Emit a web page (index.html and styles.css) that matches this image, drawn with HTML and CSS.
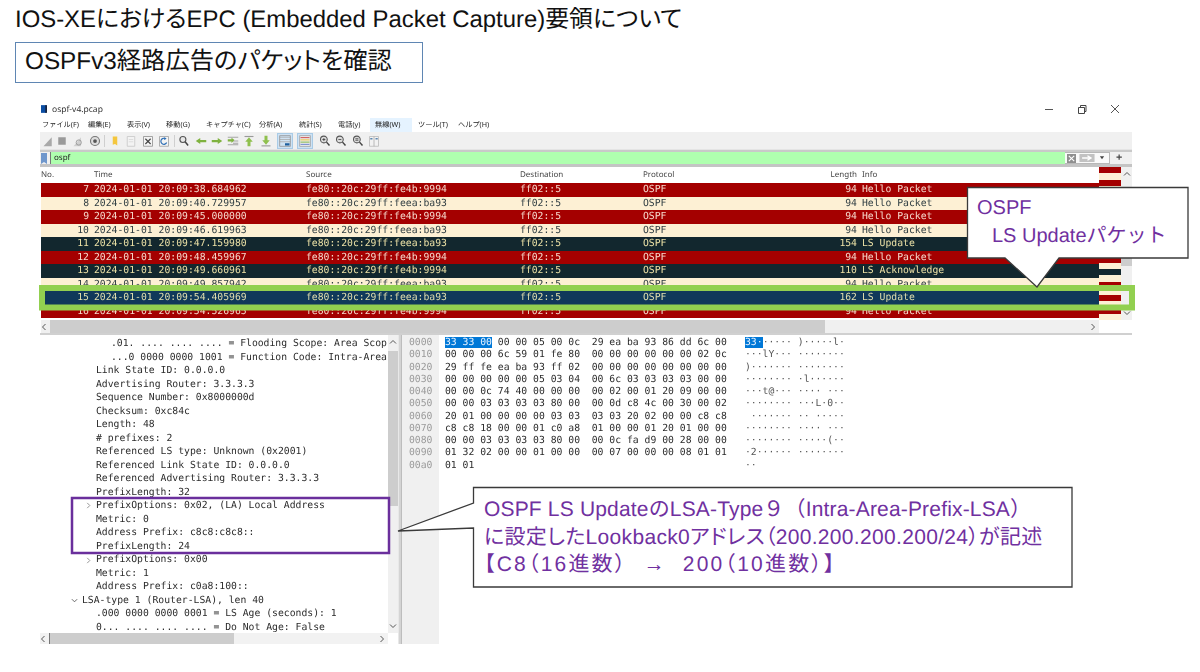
FILE: index.html
```html
<!DOCTYPE html>
<html lang="ja">
<head>
<meta charset="utf-8">
<title>IOS-XE EPC</title>
<link rel="stylesheet" href="styles.css">
</head>
<body>
<main class="slide">
  <h1 class="title">IOS-XEにおけるEPC (Embedded Packet Capture)要領について</h1>
  <h2 class="subtitle">OSPFv3経路広告のパケットを確認</h2>

  <section class="window">
    <header class="titlebar">
      <svg class="appicon" viewBox="0 0 7 9"><rect width="6" height="9" fill="#0b4da2"/><rect x="5" width="2" height="9" fill="#16233f"/></svg>
      <span class="wintitle">ospf-v4.pcap</span>
      <span class="winbtns">
        <svg viewBox="0 0 10 10"><path d="M1 5.500h8" stroke="#555" fill="none"/></svg>
        <svg viewBox="0 0 10 10"><path d="M1.500 3.500h6v6h-6zM3.500 3.500v-2h5.500v6h-1.500" stroke="#444" fill="none"/></svg>
        <svg viewBox="0 0 10 10"><path d="M1 1l8 8M9 1l-8 8" stroke="#555" fill="none"/></svg>
      </span>
    </header>

    <nav class="menu">
      <span class="mi">ファイル(F)</span><span class="mi">編集(E)</span><span class="mi">表示(V)</span><span class="mi">移動(G)</span><span class="mi">キャプチャ(C)</span><span class="mi">分析(A)</span><span class="mi">統計(S)</span><span class="mi">電話(y)</span><span class="mi on">無線(W)</span><span class="mi">ツール(T)</span><span class="mi">ヘルプ(H)</span>
    </nav>

    <div class="toolbar">
      <span class="tb lead"><svg viewBox="0 0 16 16"><path d="M2 15L13 3v12z" fill="#a9a9a9"/></svg></span>
      <span class="tb"><svg viewBox="0 0 16 16"><rect x="3" y="3" width="10" height="10" fill="#9a9a9a"/></svg></span>
      <span class="tb"><svg viewBox="0 0 16 16"><path d="M2 15L12 3v12z" fill="#cfcfcf"/><circle cx="9" cy="10" r="3.500" fill="none" stroke="#8c8c8c"/></svg></span>
      <span class="tb"><svg viewBox="0 0 16 16"><circle cx="8" cy="8" r="6" fill="#ddd" stroke="#777" stroke-width="1.500"/><circle cx="8" cy="8" r="2.500" fill="#555"/></svg></span>
      <span class="sep"></span>
      <span class="tb"><svg viewBox="0 0 16 16"><path d="M5 2h6v12l-3-2-3 1z" fill="#f4c63d"/></svg></span>
      <span class="tb"><svg viewBox="0 0 16 16"><path d="M3 2h10v13H3z" fill="#f3f3f3" stroke="#c4c4c4"/><path d="M5 6h6M5 9h6" stroke="#d5d5d5"/></svg></span>
      <span class="tb"><svg viewBox="0 0 16 16"><path d="M2 2h12v13H2z" fill="#f4f4f4" stroke="#888"/><path d="M4.500 5l7 7M11.500 5l-7 7" stroke="#444" stroke-width="1.500"/></svg></span>
      <span class="tb"><svg viewBox="0 0 16 16"><path d="M2 2h12v13H2z" fill="#f4f4f4" stroke="#999"/><path d="M11.500 10A4 4 0 1 1 10 5" fill="none" stroke="#2f6fb5" stroke-width="1.600"/><path d="M8.500 2.500l3 2.500-3.500 1.500z" fill="#2f6fb5"/></svg></span>
      <span class="sep"></span>
      <span class="tb"><svg viewBox="0 0 16 16"><circle cx="6.500" cy="6" r="4" fill="#e8e8e8" stroke="#555" stroke-width="1.500"/><path d="M9.500 9l4 5" stroke="#444" stroke-width="2"/></svg></span>
      <span class="tb"><svg viewBox="0 0 16 16"><path d="M1 8l6-4v2.500h8v3H7V12z" fill="#7fb23f"/></svg></span>
      <span class="tb"><svg viewBox="0 0 16 16"><path d="M15 8L9 4v2.500H1v3h8V12z" fill="#7fb23f"/></svg></span>
      <span class="tb"><svg viewBox="0 0 16 16"><path d="M1 3h14M1 13h14M8 11h7M8 8h7" stroke="#8d8d8d"/><path d="M10 6.500L6 3.500v2H1v3h5v2z" fill="#7fb23f"/></svg></span>
      <span class="tb"><svg viewBox="0 0 16 16"><path d="M2 2h12" stroke="#9a9a9a" stroke-width="1.500"/><path d="M8 3l5 6h-3v6H6V9H3z" fill="#8fc04e"/></svg></span>
      <span class="tb"><svg viewBox="0 0 16 16"><path d="M2 14.500h12" stroke="#9a9a9a" stroke-width="1.500"/><path d="M8 13l5-6h-3V1H6v6H3z" fill="#8fc04e"/></svg></span>
      <span class="tb hl first"><svg viewBox="0 0 16 16"><path d="M1 3h14M1 6h14M1 9h14" stroke="#a8a8a8"/><rect x="1" y="1" width="14" height="14" fill="none" stroke="#8d8d8d"/><rect x="8" y="11" width="6" height="3" fill="#1f5f9e"/></svg></span>
      <span class="tb hl"><svg viewBox="0 0 16 16"><rect x="1" y="1" width="14" height="14" fill="#eee" stroke="#999"/><path d="M2 3.500h12" stroke="#d25c5c" stroke-width="1.500"/><path d="M2 6.500h12" stroke="#e8c84e" stroke-width="1.500"/><path d="M2 9.500h12" stroke="#8bbb5a" stroke-width="1.500"/><path d="M2 12.500h12" stroke="#7a8fd0" stroke-width="1.500"/></svg></span>
      <span class="tb"><svg viewBox="0 0 16 16"><circle cx="6.500" cy="6" r="4.500" fill="#ddd" stroke="#555" stroke-width="1.400"/><path d="M4.500 6h4M6.500 4v4" stroke="#333"/><path d="M10 9.500l4 4.500" stroke="#444" stroke-width="2"/></svg></span>
      <span class="tb"><svg viewBox="0 0 16 16"><circle cx="6.500" cy="6" r="4.500" fill="#ddd" stroke="#555" stroke-width="1.400"/><path d="M4.500 6h4" stroke="#333"/><path d="M10 9.500l4 4.500" stroke="#444" stroke-width="2"/></svg></span>
      <span class="tb"><svg viewBox="0 0 16 16"><circle cx="6.500" cy="6" r="4.500" fill="#ddd" stroke="#555" stroke-width="1.400"/><path d="M4.500 5h4M4.500 7h4" stroke="#333"/><path d="M10 9.500l4 4.500" stroke="#444" stroke-width="2"/></svg></span>
      <span class="tb"><svg viewBox="0 0 16 16"><path d="M2 2h12v13H2z" fill="#f2f2f2" stroke="#b5b5b5"/><path d="M8 2v13" stroke="#a5a5a5"/><path d="M3 4h3v2H3zM10 4h3v2h-3z" fill="#5f88b0"/></svg></span>
    </div>

    <div class="filterbar">
      <svg class="bookmark" viewBox="0 0 6 11"><path d="M0 0h6v11L3 9l-3 2z" fill="#6f97cc"/></svg>
      <div class="filterfield">ospf</div>
      <div class="filterbtns">
        <svg class="fx" viewBox="0 0 10 10"><rect width="10" height="10" fill="#8f8f8f"/><path d="M2 2l6 6M8 2l-6 6" stroke="#fff" stroke-width="1.200"/></svg>
        <svg class="fa" viewBox="0 0 17 9"><rect width="17" height="9" fill="#c2c2c2"/><path d="M3 4.500h9M9 2l4 2.500L9 7" stroke="#fff" stroke-width="1.500" fill="none"/></svg>
        <svg class="fd" viewBox="0 0 7 4"><path d="M1 0h5L3.500 3.500z" fill="#444"/></svg>
      </div>
      <span class="fplus">+</span>
    </div>

    <div class="listwrap">
      <div class="listmain">
        <div class="phead"><span class="c-no">No.</span><span>Time</span><span>Source</span><span>Destination</span><span>Protocol</span><span class="c-len-h">Length</span><span>Info</span></div>
        <div class="prow red"><span class="c-no">7</span><span>2024-01-01 20:09:38.684962</span><span>fe80::20c:29ff:fe4b:9994</span><span>ff02::5</span><span>OSPF</span><span class="c-len">94</span><span>Hello Packet</span></div>
        <div class="prow cream"><span class="c-no">8</span><span>2024-01-01 20:09:40.729957</span><span>fe80::20c:29ff:feea:ba93</span><span>ff02::5</span><span>OSPF</span><span class="c-len">94</span><span>Hello Packet</span></div>
        <div class="prow red"><span class="c-no">9</span><span>2024-01-01 20:09:45.000000</span><span>fe80::20c:29ff:fe4b:9994</span><span>ff02::5</span><span>OSPF</span><span class="c-len">94</span><span>Hello Packet</span></div>
        <div class="prow cream"><span class="c-no">10</span><span>2024-01-01 20:09:46.619963</span><span>fe80::20c:29ff:feea:ba93</span><span>ff02::5</span><span>OSPF</span><span class="c-len">94</span><span>Hello Packet</span></div>
        <div class="prow dark"><span class="c-no">11</span><span>2024-01-01 20:09:47.159980</span><span>fe80::20c:29ff:feea:ba93</span><span>ff02::5</span><span>OSPF</span><span class="c-len">154</span><span>LS Update</span></div>
        <div class="prow red"><span class="c-no">12</span><span>2024-01-01 20:09:48.459967</span><span>fe80::20c:29ff:fe4b:9994</span><span>ff02::5</span><span>OSPF</span><span class="c-len">94</span><span>Hello Packet</span></div>
        <div class="prow dark"><span class="c-no">13</span><span>2024-01-01 20:09:49.660961</span><span>fe80::20c:29ff:fe4b:9994</span><span>ff02::5</span><span>OSPF</span><span class="c-len">110</span><span>LS Acknowledge</span></div>
        <div class="prow cream"><span class="c-no">14</span><span>2024-01-01 20:09:49.857942</span><span>fe80::20c:29ff:feea:ba93</span><span>ff02::5</span><span>OSPF</span><span class="c-len">94</span><span>Hello Packet</span></div>
        <div class="prow sel"><span class="c-no">15</span><span>2024-01-01 20:09:54.405969</span><span>fe80::20c:29ff:feea:ba93</span><span>ff02::5</span><span>OSPF</span><span class="c-len">162</span><span>LS Update</span></div>
        <div class="prow red"><span class="c-no">16</span><span>2024-01-01 20:09:54.526965</span><span>fe80::20c:29ff:fe4b:9994</span><span>ff02::5</span><span>OSPF</span><span class="c-len">94</span><span>Hello Packet</span></div>
        <div class="hscroll top">
          <svg class="sa" viewBox="0 0 6 8"><path d="M4.500 1L1.500 4l3 3" stroke="#555" fill="none"/></svg>
          <span class="thumb long"></span>
          <svg class="sa end" viewBox="0 0 6 8"><path d="M1.500 1l3 3-3 3" stroke="#555" fill="none"/></svg>
        </div>
      </div>
      <div class="minimap">
        <i class="m-r"></i><i class="m-c"></i><i class="m-r"></i><i class="m-c"></i><i class="m-r"></i><i class="m-c"></i><i class="m-r"></i><i class="m-c"></i><i class="m-r"></i><i class="m-c"></i><i class="m-r"></i><i class="m-c"></i><i class="m-r"></i><i class="m-b"></i><i class="m-r"></i><i class="m-c"></i><i class="m-d"></i><i class="m-c"></i><i class="m-r"></i><i class="m-c"></i><i class="m-r"></i><i class="m-c"></i><i class="m-r"></i><i class="m-c"></i>
      </div>
      <div class="vscroll list">
        <svg class="sv" viewBox="0 0 8 6"><path d="M1 4.500l3-3 3 3" stroke="#555" fill="none"/></svg>
        <span class="vthumb lt"></span>
        <svg class="sv" viewBox="0 0 8 6"><path d="M1 1.500l3 3 3-3" stroke="#555" fill="none"/></svg>
      </div>
    </div>

    <div class="panes">
      <div class="treepane">
        <div class="tree">
          <div class="tl d3">.01. .... .... .... = Flooding Scope: Area Scope</div>
          <div class="tl d3">...0 0000 0000 1001 = Function Code: Intra-Area-Prefix</div>
          <div class="tl d2">Link State ID: 0.0.0.0</div>
          <div class="tl d2">Advertising Router: 3.3.3.3</div>
          <div class="tl d2">Sequence Number: 0x8000000d</div>
          <div class="tl d2">Checksum: 0xc84c</div>
          <div class="tl d2">Length: 48</div>
          <div class="tl d2"># prefixes: 2</div>
          <div class="tl d2">Referenced LS type: Unknown (0x2001)</div>
          <div class="tl d2">Referenced Link State ID: 0.0.0.0</div>
          <div class="tl d2">Referenced Advertising Router: 3.3.3.3</div>
          <div class="tl d2">PrefixLength: 32</div>
          <div class="tl d2 ex"><svg class="chev" viewBox="0 0 6 8"><path d="M1.500 1l3 3-3 3" stroke="#888" fill="none"/></svg>PrefixOptions: 0x02, (LA) Local Address</div>
          <div class="tl d2">Metric: 0</div>
          <div class="tl d2">Address Prefix: c8c8:c8c8::</div>
          <div class="tl d2">PrefixLength: 24</div>
          <div class="tl d2 ex"><svg class="chev" viewBox="0 0 6 8"><path d="M1.500 1l3 3-3 3" stroke="#888" fill="none"/></svg>PrefixOptions: 0x00</div>
          <div class="tl d2">Metric: 1</div>
          <div class="tl d2">Address Prefix: c0a8:100::</div>
          <div class="tl d1 ex"><svg class="chev" viewBox="0 0 8 6"><path d="M1 1.500l3 3 3-3" stroke="#555" fill="none"/></svg>LSA-type 1 (Router-LSA), len 40</div>
          <div class="tl d2">.000 0000 0000 0001 = LS Age (seconds): 1</div>
          <div class="tl d2">0... .... .... .... = Do Not Age: False</div>
        </div>
        <div class="hscroll bottom">
          <svg class="sa" viewBox="0 0 6 8"><path d="M4.500 1L1.500 4l3 3" stroke="#555" fill="none"/></svg>
          <span class="thumb short"></span>
          <svg class="sa end" viewBox="0 0 6 8"><path d="M1.500 1l3 3-3 3" stroke="#555" fill="none"/></svg>
        </div>
      </div>
      <div class="vscroll tree-v">
        <svg class="sv" viewBox="0 0 8 6"><path d="M1 4.500l3-3 3 3" stroke="#555" fill="none"/></svg>
        <span class="vthumb tv"></span>
        <svg class="sv" viewBox="0 0 8 6"><path d="M1 1.500l3 3 3-3" stroke="#555" fill="none"/></svg>
      </div>
      <div class="splitter"></div>
      <pre class="offsets">0000
0010
0020
0030
0040
0050
0060
0070
0080
0090
00a0</pre>
      <pre class="hex"><span class="pick">33 33 00</span> 00 00 05 00 0c  29 ea ba 93 86 dd 6c 00
00 00 00 6c 59 01 fe 80  00 00 00 00 00 00 02 0c
29 ff fe ea ba 93 ff 02  00 00 00 00 00 00 00 00
00 00 00 00 00 05 03 04  00 6c 03 03 03 03 00 00
00 00 0c 74 40 00 00 00  00 02 00 01 20 09 00 00
00 00 03 03 03 03 80 00  00 0d c8 4c 00 30 00 02
20 01 00 00 00 00 03 03  03 03 20 02 00 00 c8 c8
c8 c8 18 00 00 01 c0 a8  01 00 00 01 20 01 00 00
00 00 03 03 03 03 80 00  00 0c fa d9 00 28 00 00
01 32 02 00 00 01 00 00  00 07 00 00 00 08 01 01
01 01</pre>
      <pre class="ascii"><span class="pick">33·</span>····· )·····l·
···lY··· ········
)······· ········
········ ·l······
···t@··· ···· ···
········ ···L·0··
 ······· ·· ·····
········ ···· ···
········ ·····(··
·2······ ········
··</pre>
    </div>
  </section>

  <svg class="marks" viewBox="0 0 1200 672">
    <rect class="green" x="42" y="288" width="1090" height="19.500"/>
    <rect class="purple" x="72" y="498" width="317" height="55"/>
    <path class="bubble" d="M967.500 187.500H1188V258H1059L1037 287 1005 258H967.500z"/>
    <path class="bubble" d="M473.500 487.500H1072V587H473.500V528L398 531 473.500 503z"/>
  </svg>
  <div class="note n1">OSPF<br><span class="ind">LS Updateパケット</span></div>
  <div class="note n2"><span class="l1">OSPF LS UpdateのLSA-Type９（Intra-Area-Prefix-LSA）</span><br><span class="tight l2">に設定したLookback0アドレス（200.200.200.200/24）が記述</span><br><span class="tight l3">【C8（16進数）  →  200（10進数）】</span></div>
</main>
</body>
</html>
```

FILE: styles.css
```css
* { box-sizing: border-box; }
html, body { margin: 0; padding: 0; background: #fff; }
.slide {
  position: relative;
  width: 1200px;
  height: 672px;
  overflow: hidden;
  font-family: "Liberation Sans", "Noto Sans CJK JP", sans-serif;
  font-feature-settings: "palt";
  text-rendering: geometricPrecision;
}
.title {
  margin: 0 0 0 15px;
  height: 38px;
  font-size: 23.900px;
  line-height: 39px;
  font-weight: 400;
  color: #111;
  white-space: nowrap;
}
.subtitle {
  margin: 4px 0 0 15px;
  width: 408px;
  height: 41px;
  padding-left: 9px;
  border: 1px solid #5f86b3;
  font-size: 24.300px;
  line-height: 37px;
  font-weight: 400;
  color: #111;
  white-space: nowrap;
}
.window {
  width: 1092px;
  margin: 17px 0 0 40px;
  height: 545px;
  background: #fff;
  font-family: "Noto Sans", "Noto Sans CJK JP", sans-serif;
  color: #333;
  font-feature-settings: normal;
  filter: blur(0.3px);
}
.titlebar {
  height: 18px;
  display: flex;
  align-items: center;
  padding-left: 1px;
}
.appicon { width: 6px; height: 8px; margin-right: 5px; }
.wintitle { font-size: 8.500px; color: #333; }
.winbtns {
  margin-left: auto;
  display: flex;
  gap: 23px;
  padding-right: 12px;
}
.winbtns svg { width: 10px; height: 10px; display: block; }
.menu {
  height: 14px;
  display: flex;
  align-items: stretch;
  font-size: 7.200px;
  line-height: 14px;
  color: #222;
  white-space: nowrap;
}
.mi { padding: 0 0 0 2px; }
.mi:nth-child(1) { width: 46px; }
.mi:nth-child(2) { width: 39px; }
.mi:nth-child(3) { width: 39px; }
.mi:nth-child(4) { width: 40px; }
.mi:nth-child(5) { width: 53px; }
.mi:nth-child(6) { width: 40px; }
.mi:nth-child(7) { width: 39px; }
.mi:nth-child(8) { width: 34px; }
.mi.on { width: 42px; background: #e5f3ff; padding-left: 5px; }
.mi:nth-child(10) { width: 43px; padding-left: 6px; }
.mi:nth-child(11) { padding-left: 3px; }
.toolbar {
  height: 18px;
  background: #f0f0f0;
  display: flex;
  align-items: center;
  border-bottom: 1px solid #e4e4e4;
}
.tb {
  width: 16.300px;
  height: 16px;
  flex: none;
  display: flex;
  align-items: center;
  justify-content: center;
}
.tb svg { width: 12px; height: 12px; display: block; }
.tb.lead { width: 14px; justify-content: flex-end; }
.tb.hl {
  width: 16px;
  margin-right: 4px;
  background: #cfe2f3;
  border: 1px solid #a9cbe6;
}
.tb.hl.first { margin-left: 3px; }
.tb.hl svg { width: 12px; height: 12px; }
.sep {
  width: 1px;
  height: 12px;
  margin: 0 1.500px;
  background: #cfcfcf;
  flex: none;
}
.filterbar {
  height: 17px;
  display: flex;
  align-items: center;
  background: #f0f0f0;
  border-top: 2px solid #c9c9c9;
  border-bottom: 3px solid #c4c4c4;
  padding-left: 1px;
}
.bookmark { width: 6px; height: 11px; flex: none; margin-right: 3px; }
.filterfield {
  width: 1015px;
  height: 12px;
  background: #afffaf;
  border-left: 1px solid #777;
  padding-left: 3px;
  font-size: 8px;
  line-height: 11px;
  color: #222;
  flex: none;
}
.filterbtns {
  display: flex;
  align-items: center;
  width: 45px;
  height: 12px;
  padding-left: 2px;
  background: #fafafa;
  border: 1px solid #b8b8b8;
  border-left: 0;
  flex: none;
}
.fx { width: 9px; height: 9px; margin-right: 3px; }
.fa { width: 16px; height: 8px; margin-right: 4px; }
.fd { width: 6px; height: 4px; }
.fplus { font-size: 11px; line-height: 12px; margin-left: 6px; color: #444; font-weight: 700; }
.listwrap {
  display: flex;
  height: 168px;
  border-bottom: 2px solid #d0d0d0;
}
.listmain { width: 1059px; flex: none; overflow: hidden; padding-left: 1px; }
.phead, .prow {
  display: grid;
  grid-template-columns: 53px 212px 214px 123px 157px 62px 1fr;
  white-space: nowrap;
}
.phead {
  height: 16px;
  font-size: 8px;
  line-height: 16px;
  color: #444;
}
.phead .c-no { text-align: left; padding: 0; }
.c-len-h { text-align: right; padding-right: 5px; }
.prow {
  height: 13.500px;
  font-family: "DejaVu Sans Mono", monospace;
  font-size: 9.750px;
  line-height: 14px;
  overflow: hidden;
}
.c-no { text-align: right; padding-right: 5px; }
.c-len { text-align: right; padding-right: 5px; }
.red { background: #a40000; color: #f6d9cc; }
.cream { background: #fdf0d4; color: #2f3d42; }
.dark { background: #12272e; color: #ece1a6; }
.sel { background: #10395a; color: #e2dfae; }
.hscroll {
  display: flex;
  align-items: center;
  background: #f0f0f0;
}
.hscroll.top { height: 13px; margin-top: 2px; }
.hscroll.bottom { height: 11px; margin-top: auto; margin-bottom: 1px; background: #f2f2f2; }
.sa { width: 6px; height: 8px; flex: none; margin-right: 3px; }
.sa.end { margin: 0 3px 0 auto; }
.thumb { display: block; height: 100%; background: #cdcdcd; }
.thumb.long { width: 775px; }
.thumb.short { width: 185px; border-left: 1px solid #777; }
.minimap {
  width: 22px;
  flex: none;
  display: flex;
  flex-direction: column;
  height: 153px;
}
.minimap i { display: block; flex: 1; }
.m-r { background: #a40000; }
.m-c { background: #fdf0d4; }
.m-d { background: #12272e; }
.m-b { background: #0078d7; }
.vscroll {
  display: flex;
  flex-direction: column;
  align-items: center;
  background: #f0f0f0;
  flex: none;
}
.vscroll.list { width: 11px; height: 153px; }
.sv { width: 8px; height: 6px; flex: none; margin: 4px 0; }
.sv:last-child { margin-top: auto; }
.vthumb { display: block; width: 100%; background: #cdcdcd; }
.vthumb.lt { height: 8px; margin-top: 77px; }
.panes {
  display: flex;
  height: 310px;
}
.treepane {
  width: 348px;
  flex: none;
  display: flex;
  flex-direction: column;
}
.tree {
  padding-top: 2px;
  margin-right: 1px;
  overflow: hidden;
  font-family: "DejaVu Sans Mono", monospace;
  font-size: 9.750px;
  color: #2b2b2b;
}
.tl { height: 13.530px; line-height: 13.530px; white-space: nowrap; display: flex; align-items: center; }
.d1 { padding-left: 42px; }
.d2 { padding-left: 56px; }
.d3 { padding-left: 71px; }
.d1.ex { padding-left: 31px; }
.d2.ex { padding-left: 45px; }
.chev { width: 7px; height: 7px; flex: none; margin-right: 4px; }
.vscroll.tree-v { width: 10px; height: 298px; }
.vthumb.tv { height: 155px; margin-top: 2px; }
.splitter {
  width: 4px;
  flex: none;
  background: #d4d4d4;
  border-left: 1px solid #e8e8e8;
  border-right: 1px solid #bdbdbd;
  height: 309px;
}
.offsets, .hex, .ascii {
  margin: 0;
  font-family: "DejaVu Sans Mono", monospace;
  font-size: 9.750px;
  line-height: 12.250px;
  padding-top: 2px;
  flex: none;
}
.offsets {
  width: 37px;
  height: 309px;
  padding-left: 7px;
  background: #f0f0f0;
  color: #9a9a9a;
}
.hex { margin-left: 6px; width: 300px; color: #2b2b2b; }
.ascii { color: #555; }
.pick { background: #0078d7; color: #e8f3ff; }
.marks {
  position: absolute;
  left: 0;
  top: 0;
  width: 1200px;
  height: 672px;
  pointer-events: none;
}
.green { fill: none; stroke: #92d050; stroke-width: 6; }
.purple { fill: none; stroke: #6a2f9c; stroke-width: 2.500; }
.bubble { fill: #fff; stroke: #3a3a3a; stroke-width: 1.300; }
.note {
  position: absolute;
  color: #7030a0;
  white-space: nowrap;
  font-feature-settings: normal;
}
.n1 { left: 977px; top: 195px; font-size: 20px; line-height: 27.500px; }
.n1 .ind { margin-left: 15px; }
.n2 { left: 484px; top: 496px; font-size: 21px; line-height: 27.500px; white-space: pre; }
.tight { font-feature-settings: "palt"; }
.l1 { letter-spacing: 0.170px; }
.l2 { letter-spacing: 0.320px; }
.l3 { letter-spacing: 2.200px; }
```
